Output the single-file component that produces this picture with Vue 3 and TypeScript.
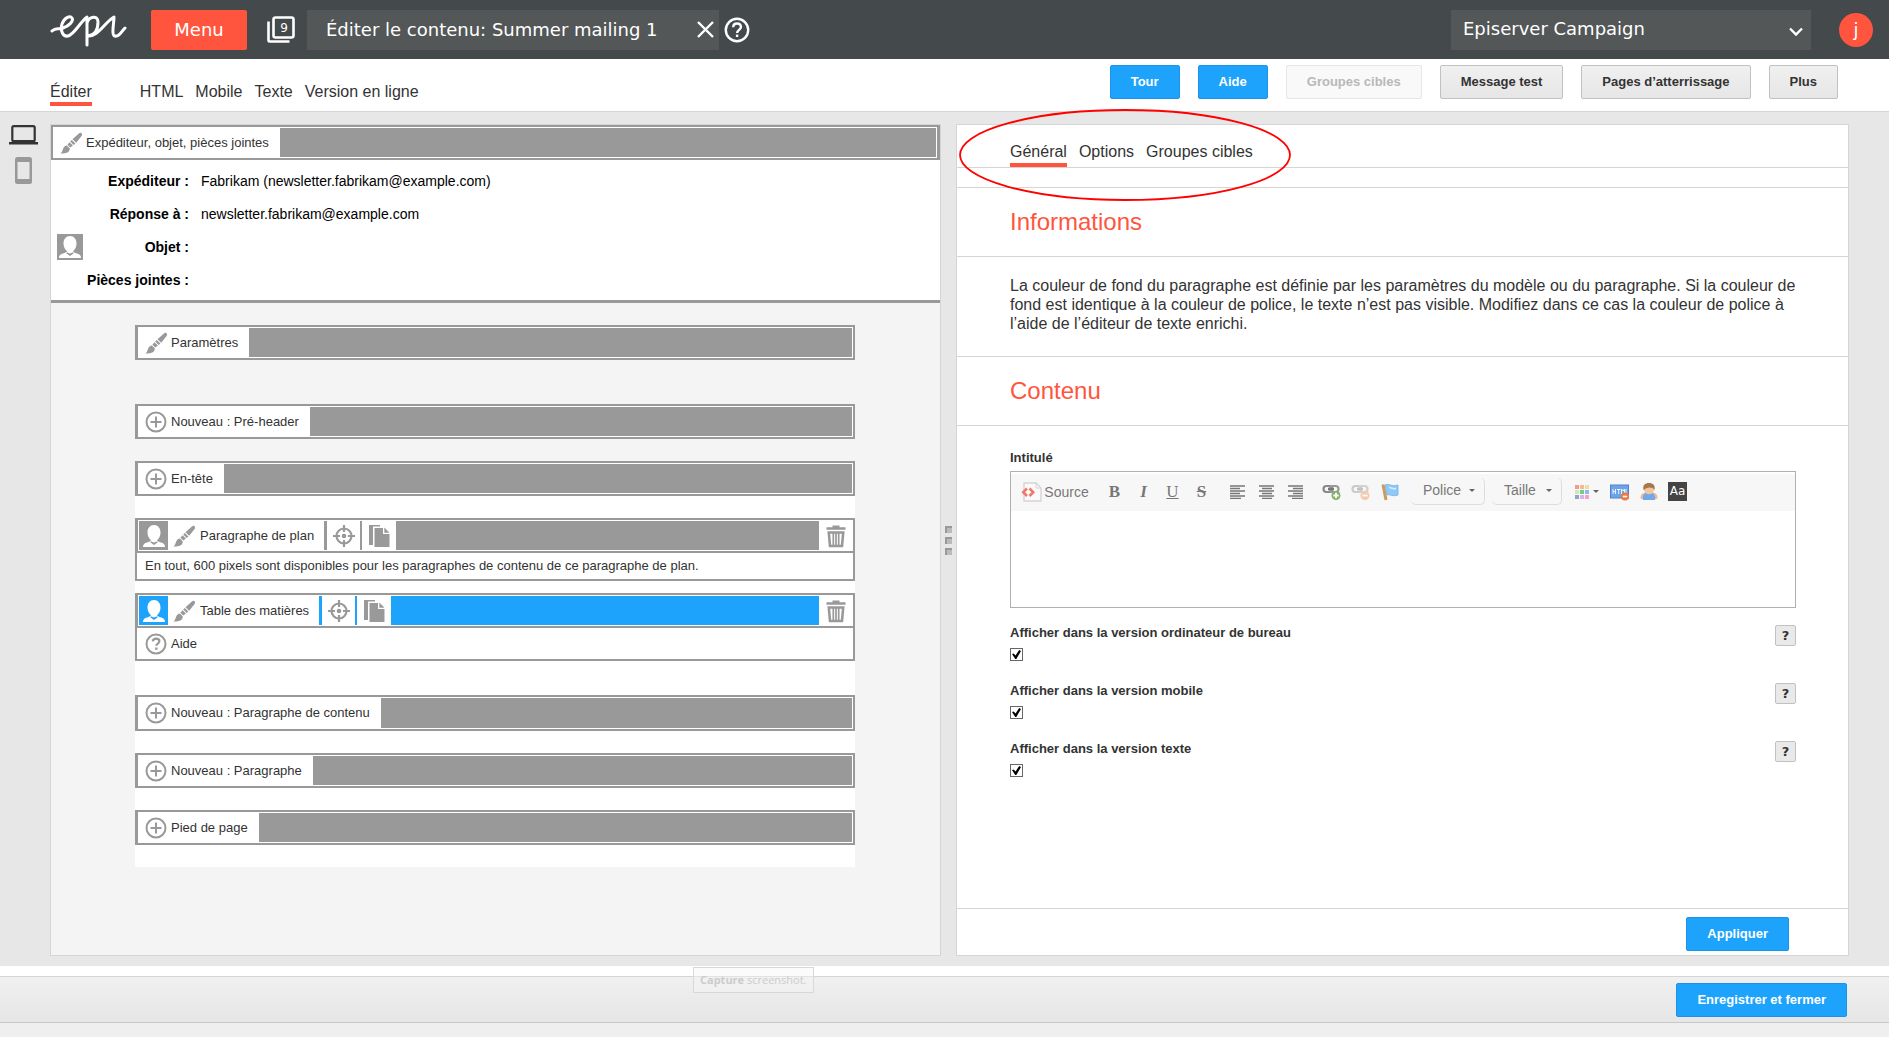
<script setup lang="ts">
import { ref } from 'vue'

interface Block {
  id: string
  label: string
  icon: 'brush' | 'plus'
  tools?: boolean
  selected?: boolean
  note?: string
  help?: string
}

interface Display {
  id: string
  label: string
}

const views: string[] = ['HTML', 'Mobile', 'Texte', 'Version en ligne']

const sender = [
  { label: 'Expéditeur :', value: 'Fabrikam (newsletter.fabrikam@example.com)' },
  { label: 'Réponse à :', value: 'newsletter.fabrikam@example.com' },
  { label: 'Objet :', value: '', person: true },
  { label: 'Pièces jointes :', value: '' },
]

const topBlocks: Block[] = [
  { id: 'params', label: 'Paramètres', icon: 'brush' },
  { id: 'preheader', label: 'Nouveau : Pré-header', icon: 'plus' },
  { id: 'header', label: 'En-tête', icon: 'plus' },
]

const bodyBlocks: Block[] = [
  {
    id: 'layout',
    label: 'Paragraphe de plan',
    icon: 'brush',
    tools: true,
    note: 'En tout, 600 pixels sont disponibles pour les paragraphes de contenu de ce paragraphe de plan.',
  },
  { id: 'toc', label: 'Table des matières', icon: 'brush', tools: true, selected: true, help: 'Aide' },
  { id: 'content', label: 'Nouveau : Paragraphe de contenu', icon: 'plus' },
  { id: 'paragraph', label: 'Nouveau : Paragraphe', icon: 'plus' },
  { id: 'footer', label: 'Pied de page', icon: 'plus' },
]

const displays: Display[] = [
  { id: 'desktop', label: 'Afficher dans la version ordinateur de bureau' },
  { id: 'mobile', label: 'Afficher dans la version mobile' },
  { id: 'text', label: 'Afficher dans la version texte' },
]

const shown = ref<string[]>(['desktop', 'mobile', 'text'])
const title = ref('')
</script>

<template>
  <div class="page">
    <svg class="sprite" aria-hidden="true">
      <symbol id="i-brush" viewBox="0 0 22 22">
        <path d="M21.500 1.200c.9.900.6 2-.1 3l-5.200 6.600-3.700-3.600 6.400-5.800c.9-.8 1.900-.9 2.600-.2zM11.800 7.900l3.600 3.500-1.700 1.700-3.500-3.500zM9.500 10.200l3.400 3.400-2.600 2-2.900-2.900zM6.900 13.500l2.800 2.800c.3 1.800-.7 3.400-2.500 4.300-1.800.8-4.300 1-6.700.9 1.700-1.300 1.900-2.800 2.600-4.700.7-2 2-3 3.800-3.300z" fill="currentColor" />
      </symbol>
      <symbol id="i-plus" viewBox="0 0 22 22">
        <circle cx="11" cy="11" r="9.500" fill="none" stroke="currentColor" stroke-width="2" />
        <path d="M11 5.500v11M5.500 11h11" stroke="currentColor" stroke-width="2" />
      </symbol>
      <symbol id="i-help" viewBox="0 0 22 22">
        <circle cx="11" cy="11" r="9.500" fill="none" stroke="currentColor" stroke-width="2" />
        <path d="M7.800 8.300c.2-1.700 1.500-2.700 3.300-2.700 1.900 0 3.300 1 3.300 2.600 0 2.200-3.100 2.400-3.100 4.500" fill="none" stroke="currentColor" stroke-width="2.200" />
        <path d="M10.100 14.500h2.400v2.300h-2.400z" fill="currentColor" />
      </symbol>
      <symbol id="i-person" viewBox="0 0 26 26">
        <path d="M13 2c4 0 6.500 3.300 6.500 7.500 0 3.300-1.500 6.200-3.500 7.800.5 1.300 2 1.600 4 2.200 2.500.7 4 1.700 4 4.500H2c0-2.800 1.500-3.800 4-4.500 2-.6 3.500-.9 4-2.200-2-1.600-3.500-4.500-3.500-7.800C6.500 5.300 9 2 13 2z" fill="#fff" />
        <path d="M10 18.300q3 2.200 6 0l.8 1L13 22l-3.800-2.700z" fill="currentColor" />
      </symbol>
      <symbol id="i-target" viewBox="0 0 22 22">
        <circle cx="11" cy="11" r="7.500" fill="none" stroke="currentColor" stroke-width="2.200" />
        <circle cx="11" cy="11" r="2.300" fill="currentColor" />
        <path d="M11 0v7M11 15v7M0 11h7M15 11h7" stroke="currentColor" stroke-width="2.200" />
      </symbol>
      <symbol id="i-copy" viewBox="0 0 22 24">
        <path d="M1 1h11v1.500H5V21H1z" fill="currentColor" />
        <path d="M6.500 4H15v6h6.500v13h-15z" fill="currentColor" />
        <path d="M16.300 3.500l5.200 5.200h-5.200z" fill="currentColor" />
      </symbol>
      <symbol id="i-trash" viewBox="0 0 20 24">
        <path d="M.5 3.200h6V1.500h7v1.700h6v2.600H.5z" fill="currentColor" />
        <path d="M2.800 8.500h14.400L16 22H4z" fill="none" stroke="currentColor" stroke-width="2.600" />
        <path d="M7.300 9v12M10 9v12M12.700 9v12" stroke="currentColor" stroke-width="1.700" />
      </symbol>
      <symbol id="i-chain" viewBox="0 0 20 18">
        <rect x="1.500" y="3" width="9" height="6" rx="3" fill="none" stroke="#888" stroke-width="2.200" />
        <rect x="7.500" y="3" width="9" height="6" rx="3" fill="none" stroke="#999" stroke-width="2.200" />
        <path d="M6 6h6" stroke="#777" stroke-width="2" />
      </symbol>
    </svg>

    <header class="topbar">
      <svg class="logo" viewBox="0 0 78 34" aria-label="epi">
        <path d="M2 18C6 14 8 17 13 15c6-2 11-7 9-10-2-3-8 0-10 6-2 7 1 13 6 12C24 22 31 8 37 4M37 6v26M37 10c2-7 11-8 11-1 0 7-2 13-10 14C48 24 54 10 64 4c0 6-3 19 1 19 4 1 6-4 10-8" fill="none" stroke="#fff" stroke-width="3" stroke-linecap="round" stroke-linejoin="round" />
      </svg>
      <button class="menu" type="button">Menu</button>
      <button class="windows" type="button" aria-label="Fenêtres ouvertes">
        <svg viewBox="0 0 28 28" aria-hidden="true">
          <rect x="6.500" y="1.500" width="20" height="20" rx="2" fill="none" stroke="#fff" stroke-width="2.600" />
          <path d="M1.500 5.500v19q0 1 1 1h20" fill="none" stroke="#fff" stroke-width="2.600" />
        </svg>
        <span class="count">9</span>
      </button>
      <div class="doc">
        <h1>Éditer le contenu: Summer mailing 1</h1>
        <button type="button" aria-label="Fermer">
          <svg width="17" height="17" viewBox="0 0 17 17"><path d="M1 1l15 15M16 1L1 16" stroke="#fff" stroke-width="2.400" /></svg>
        </button>
      </div>
      <button class="tophelp" type="button" aria-label="Aide">
        <svg width="26" height="26" viewBox="0 0 26 26">
          <circle cx="13" cy="13" r="11.200" fill="none" stroke="#fff" stroke-width="2.400" />
          <path d="M9.200 10.200c0-2.300 1.600-3.700 3.800-3.700s3.900 1.400 3.900 3.500c0 2.800-3.800 3-3.800 6" fill="none" stroke="#fff" stroke-width="2.400" />
          <path d="M11.900 17.600h2.400V20h-2.400z" fill="#fff" />
        </svg>
      </button>
      <div class="product">
        <select aria-label="Produit"><option>Episerver Campaign</option></select>
        <svg width="14" height="10" viewBox="0 0 14 10" aria-hidden="true"><path d="M1 1.500l6 6 6-6" fill="none" stroke="#fff" stroke-width="2.400" /></svg>
      </div>
      <button class="user" type="button">j</button>
    </header>

    <nav class="subbar">
      <div class="tabs">
        <a class="tab active first" href="#edit">Éditer</a>
        <a v-for="v in views" :key="v" class="tab" :href="'#' + v">{{ v }}</a>
      </div>
      <div class="actions">
        <button class="btn primary" type="button">Tour</button>
        <button class="btn primary" type="button">Aide</button>
        <button class="btn" type="button" disabled>Groupes cibles</button>
        <button class="btn" type="button">Message test</button>
        <button class="btn" type="button">Pages d’atterrissage</button>
        <button class="btn" type="button">Plus</button>
      </div>
    </nav>

    <main class="work">
      <aside class="devices">
        <button type="button" aria-label="Ordinateur">
          <svg width="29" height="20" viewBox="0 0 29 20"><rect x="3.300" y="1.200" width="22.400" height="15" rx="1.500" fill="none" stroke="#333" stroke-width="2.200" /><path d="M0 17h29v2.500H0z" fill="#333" /></svg>
        </button>
        <button type="button" aria-label="Mobile">
          <svg width="17" height="27" viewBox="0 0 17 27"><rect width="17" height="27" rx="2.500" fill="#999" /><path d="M2.500 5h12v17h-12z" fill="#e7e7e7" /></svg>
        </button>
      </aside>

      <section class="panel preview">
        <div class="bar">
          <button class="label" type="button"><svg class="ico"><use href="#i-brush" /></svg>Expéditeur, objet, pièces jointes</button>
          <span class="fill"></span>
        </div>
        <dl class="sender">
          <div v-for="s in sender" :key="s.label" class="row">
            <span class="mark"><svg v-if="s.person" class="face"><use href="#i-person" /></svg></span>
            <dt>{{ s.label }}</dt>
            <dd>{{ s.value }}</dd>
          </div>
        </dl>

        <div class="canvas">
          <div v-for="b in topBlocks" :key="b.id" class="bar" :class="b.id">
            <button class="label" type="button"><svg class="ico"><use :href="'#i-' + b.icon" /></svg>{{ b.label }}</button>
            <span class="fill"></span>
          </div>
          <div class="sheet">
            <div v-for="b in bodyBlocks" :key="b.id" class="block" :class="[b.id, { selected: b.selected }]">
              <div class="bar">
                <span v-if="b.tools" class="who"><svg><use href="#i-person" /></svg></span>
                <button class="label" :class="{ near: b.tools }" type="button"><svg class="ico"><use :href="'#i-' + b.icon" /></svg>{{ b.label }}</button>
                <template v-if="b.tools">
                  <button class="tool wide" type="button" aria-label="Cibler"><svg class="ico"><use href="#i-target" /></svg></button>
                  <button class="tool" type="button" aria-label="Copier"><svg class="sheetico"><use href="#i-copy" /></svg></button>
                </template>
                <span class="fill"></span>
                <button v-if="b.tools" class="bin" type="button" aria-label="Supprimer"><svg><use href="#i-trash" /></svg></button>
              </div>
              <p v-if="b.note" class="sub note">{{ b.note }}</p>
              <a v-if="b.help" class="sub aid" href="#aide"><svg class="ico"><use href="#i-help" /></svg>{{ b.help }}</a>
            </div>
          </div>
        </div>
      </section>

      <div class="splitter"><i></i><i></i><i></i></div>

      <section class="panel props">
        <div class="head">
          <div class="tabs">
            <a class="tab active" href="#general">Général</a>
            <a class="tab" href="#options">Options</a>
            <a class="tab" href="#groupes">Groupes cibles</a>
          </div>
        </div>
        <div class="strip"></div>
        <h2>Informations</h2>
        <p class="info">La couleur de fond du paragraphe est définie par les paramètres du modèle ou du paragraphe. Si la couleur de fond est identique à la couleur de police, le texte n’est pas visible. Modifiez dans ce cas la couleur de police à l’aide de l’éditeur de texte enrichi.</p>
        <h2>Contenu</h2>
        <form class="form" @submit.prevent>
          <label class="name" for="intitule">Intitulé</label>
          <div class="editor">
            <div class="tools">
              <button class="source" type="button">
                <svg width="21" height="20" viewBox="0 0 21 20"><path d="M3 1h12l5 5v13H3z" fill="#fafafa" stroke="#d5d5d5" stroke-width="1.400" /><path d="M15 1v5h5" fill="none" stroke="#d5d5d5" /><path d="M6 6.500L2.300 10.200 6 14M8.500 6.500l3.700 3.700L8.500 14" fill="none" stroke="#f0776c" stroke-width="2.600" /></svg>
                Source
              </button>
              <div class="group letters">
                <button type="button" class="b">B</button>
                <button type="button" class="i">I</button>
                <button type="button" class="u">U</button>
                <button type="button" class="s">S</button>
              </div>
              <div class="group">
                <button type="button" aria-label="Gauche"><svg width="16" height="14" viewBox="0 0 16 14"><path d="M0 1h15M0 3.500h10M0 6h15M0 8.500h10M0 11h15M0 13.500h11" stroke="#777" stroke-width="1.300" /></svg></button>
                <button type="button" aria-label="Centre"><svg width="16" height="14" viewBox="0 0 16 14"><path d="M0 1h15M3 3.500h10M0 6h15M3 8.500h10M0 11h15M3 13.500h10" stroke="#777" stroke-width="1.300" /></svg></button>
                <button type="button" aria-label="Droite"><svg width="16" height="14" viewBox="0 0 16 14"><path d="M0 1h15M5 3.500h10M0 6h15M5 8.500h10M0 11h15M4 13.500h11" stroke="#777" stroke-width="1.300" /></svg></button>
              </div>
              <div class="group">
                <button type="button" aria-label="Lien"><svg width="20" height="18" viewBox="0 0 20 18"><use href="#i-chain" /><circle cx="14" cy="12.500" r="4.500" fill="#7fb366" /><path d="M14 9.800v5.400M11.300 12.500h5.400" stroke="#fff" stroke-width="1.800" /></svg></button>
                <button type="button" aria-label="Supprimer le lien" class="faded"><svg width="20" height="18" viewBox="0 0 20 18"><use href="#i-chain" /><circle cx="14" cy="12.500" r="4.500" fill="#f08a4b" /><path d="M11.300 12.500h5.400" stroke="#fff" stroke-width="1.800" /></svg></button>
                <button type="button" aria-label="Ancre"><svg width="18" height="18" viewBox="0 0 18 18"><path d="M4 2c4-2 6 2 13 0v10c-5 2-8-1-11 0z" fill="#8fc9f7" stroke="#6db3ea" stroke-width=".8" /><path d="M2 1.500l3 15.500" stroke="#c99a5b" stroke-width="3" /><path d="M8 4.500c3 0 3 2 7 1" fill="none" stroke="#d6eeff" stroke-width="1.500" /></svg></button>
              </div>
              <div class="combo"><select aria-label="Police"><option>Police</option></select><i class="caret"></i></div>
              <div class="combo small"><select aria-label="Taille"><option>Taille</option></select><i class="caret"></i></div>
              <div class="group">
                <button type="button" class="swatch" aria-label="Couleur"><svg width="14" height="14" viewBox="0 0 14 14"><path d="M0 0h4v4H0z" fill="#f19a96" /><path d="M5 0h4v4H5z" fill="#f6b89a" /><path d="M10 0h4v4h-4z" fill="#f5dc94" /><path d="M0 5h4v4H0z" fill="#cdeab0" /><path d="M5 5h4v4H5z" fill="#71cf80" /><path d="M10 5h4v4h-4z" fill="#85bdf0" /><path d="M0 10h4v4H0z" fill="#8fa3cd" /><path d="M5 10h4v4H5z" fill="#dcb1ea" /><path d="M10 10h4v4h-4z" fill="#fa9ccc" /></svg><i class="caret"></i></button>
                <button type="button" aria-label="HTML"><svg width="20" height="18" viewBox="0 0 20 18"><rect x=".5" y="2" width="18" height="13" fill="#6ea3e8" stroke="#4f82cc" /><path d="M3 6v5M5.500 6v5M3 8.500h2.500M7 6.500h3.500M8.700 6.500V11M11.500 11V6l1.500 2 1.500-2v5M16 6v4.500h1.500" fill="none" stroke="#e8f2ff" /><circle cx="15" cy="13.500" r="4" fill="#ec7b3c" /><path d="M12.800 13.500h4.400" stroke="#fff" stroke-width="1.600" /></svg></button>
                <button type="button" aria-label="Personnaliser"><svg width="18" height="18" viewBox="0 0 18 18"><path d="M1 16c-2-5 3-7 8-7s10 2 8 7z" fill="#f0b98d" /><path d="M3 17c-1-5 2-8 6-8s7 3 6 8z" fill="#6fa9ea" /><circle cx="9" cy="6" r="5.200" fill="#f2c7a0" /><path d="M3.500 7C2.500 2 5 0 9 0s6.500 2 5.500 7C12 3.500 7 4 3.500 7z" fill="#a9754a" /></svg></button>
                <button type="button" class="aa"><span>Aa</span></button>
              </div>
            </div>
            <textarea id="intitule" v-model="title"></textarea>
          </div>
          <div v-for="d in displays" :key="d.id" class="option">
            <div>
              <label :for="d.id">{{ d.label }}</label>
              <input :id="d.id" v-model="shown" type="checkbox" :value="d.id" />
            </div>
            <button type="button" :aria-label="'Aide : ' + d.label">?</button>
          </div>
        </form>
        <div class="apply"><button class="btn primary" type="button">Appliquer</button></div>
        <svg class="ring" viewBox="0 0 332 92" aria-hidden="true"><ellipse cx="166" cy="46" rx="165" ry="45" fill="none" stroke="#f00" stroke-width="1.800" /></svg>
      </section>
    </main>

    <footer class="bottom">
      <div class="savebar"><button class="btn primary" type="button">Enregistrer et fermer</button></div>
      <div class="capture"><b>Capture</b> screenshot.</div>
    </footer>
  </div>
</template>

<style>
body {
  margin: 0;
}
</style>

<style scoped>
* {
  box-sizing: border-box;
}
.page {
  display: flex;
  flex-direction: column;
  min-height: 100vh;
  background: #fff;
  color: #333;
  font: 13px/16px "Liberation Sans", Arial, sans-serif;
}
.sprite {
  display: none;
}
button {
  display: flex;
  align-items: center;
  justify-content: center;
  margin: 0;
  padding: 0;
  border: 0;
  background: none;
  color: inherit;
  font: inherit;
  white-space: nowrap;
}
svg {
  flex: none;
}
a {
  color: inherit;
  text-decoration: none;
}

/* top bar */
.topbar {
  display: flex;
  align-items: center;
  height: 59px;
  padding: 0 16px 0 50px;
  background: #44494b;
  color: #fff;
  font: 18px/24px "DejaVu Sans", Verdana, sans-serif;
}
.logo {
  width: 78px;
  height: 34px;
  margin-right: 23px;
}
.menu {
  width: 96px;
  height: 40px;
  border-radius: 2px;
  background: #ff553e;
}
.windows {
  position: relative;
  width: 28px;
  height: 28px;
  margin: 0 12px 0 20px;
}
.windows .count {
  position: absolute;
  top: 0;
  right: 0;
  width: 22px;
  font-size: 12px;
  text-align: center;
}
.doc {
  display: flex;
  align-items: center;
  justify-content: space-between;
  width: 412px;
  height: 40px;
  padding: 0 5px 0 19px;
  background: #535757;
}
.doc h1 {
  margin: 0;
  font: inherit;
  white-space: nowrap;
}
.tophelp {
  margin-left: 5px;
}
.product {
  position: relative;
  width: 360px;
  height: 40px;
  margin-left: auto;
}
.product select {
  width: 100%;
  height: 100%;
  padding: 0 12px 2px;
  border: 0;
  border-radius: 0;
  appearance: none;
  background: #535757;
  color: #fff;
  font: inherit;
}
.product svg {
  position: absolute;
  top: 17px;
  right: 8px;
}
.user {
  width: 34px;
  height: 34px;
  margin-left: 28px;
  border-radius: 50%;
  background: #ff553e;
}

/* sub bar */
.subbar {
  display: flex;
  justify-content: space-between;
  height: 53px;
  padding: 6px 51px 0 50px;
  border-bottom: 1px solid #d5d5d5;
}
.tabs {
  display: flex;
  gap: 12px;
  font-size: 16px;
  line-height: 20px;
}
.subbar .tabs {
  padding-top: 17px;
}
.tab {
  height: 25px;
  white-space: nowrap;
}
.subbar .tab {
  height: 24px;
}
.tab.active {
  border-bottom: 4px solid #ff553e;
}
.tab.first {
  margin-right: 36px;
}
.actions {
  display: flex;
  gap: 18px;
}
.btn {
  height: 34px;
  padding: 0 20px;
  border: 1px solid #c1c1c1;
  border-radius: 2px;
  background: linear-gradient(#f0f0f0, #e6e6e6);
  font-weight: bold;
}
.btn:disabled {
  border-color: #e6e6e6;
  background: #f9f9f9;
  color: #b8b8b8;
}
.btn.primary {
  border-color: #1a93ea;
  background: #1da3fc;
  color: #fff;
}

/* work area */
.work {
  display: grid;
  flex: 1;
  grid-template-columns: 50px minmax(760px, 891fr) 15px minmax(780px, 893fr);
  padding: 12px 40px 10px 0;
  background: #e7e7e7;
}
.devices {
  display: flex;
  flex-direction: column;
  align-items: flex-start;
  gap: 12px;
  padding: 1px 0 0 9px;
}
.devices button {
  width: 29px;
}
.panel {
  border: 1px solid #d5d5d5;
}
.preview {
  background: #f4f4f4;
}
.bar {
  display: flex;
  height: 35px;
  padding: 1px;
  border: 2px solid #999;
  border-left-width: 3px;
  background: #fff;
}
.preview > .bar {
  border-right-width: 3px;
  border-left-width: 2px;
}
.label {
  gap: 4px;
  padding: 0 11px 0 6px;
}
.label.near {
  gap: 5px;
  padding: 0 10px 0 5px;
}
.ico {
  width: 22px;
  height: 22px;
  color: #999;
}
.fill {
  flex: 1;
  background: #999;
}
.sender {
  margin: 0;
  padding: 4px 0;
  border-bottom: 3px solid #999;
  background: #fff;
  color: #000;
  font-size: 14px;
}
.row {
  display: flex;
  align-items: center;
  height: 33px;
}
.mark {
  width: 32px;
  padding-left: 6px;
}
.face {
  display: block;
  width: 26px;
  height: 26px;
  background: #999;
  color: #999;
}
.row dt {
  width: 106px;
  font-weight: bold;
  text-align: right;
  white-space: nowrap;
}
.row dd {
  margin: 0 0 0 12px;
}
.canvas {
  width: 720px;
  margin: 22px 84px;
}
.canvas .params {
  margin-bottom: 44px;
}
.canvas .preheader {
  margin-bottom: 22px;
}
.sheet {
  padding: 22px 0;
  background: #fff;
}
.block {
  margin-bottom: 22px;
}
.block.layout {
  margin-bottom: 12px;
}
.block.toc {
  margin-bottom: 34px;
}
.block.content .bar {
  height: 36px;
}
.block.footer {
  margin-bottom: 0;
}
.who {
  display: flex;
  align-items: center;
  justify-content: center;
  width: 29px;
  background: #999;
  color: #999;
}
.who svg {
  width: 26px;
  height: 26px;
}
.tool {
  width: 36px;
  border-left: 2px solid #999;
}
.tool.wide {
  border-left-width: 3px;
}
.sheetico {
  width: 22px;
  height: 24px;
  color: #999;
}
.bin {
  width: 33px;
  color: #999;
}
.bin svg {
  width: 20px;
  height: 24px;
}
.selected .who,
.selected .fill {
  background: #1da3fc;
}
.selected .who {
  color: #1da3fc;
}
.selected .tool {
  border-color: #1da3fc;
}
.sub {
  display: flex;
  align-items: center;
  margin: 0;
  padding: 0 8px;
  border: 2px solid #999;
  border-top: 0;
}
.note {
  height: 28px;
}
.aid {
  gap: 4px;
  height: 33px;
}

/* splitter */
.splitter {
  display: flex;
  flex-direction: column;
  align-items: center;
  justify-content: center;
  gap: 4px;
}
.splitter i {
  width: 7px;
  height: 7px;
  border-top: 2px solid #999;
  border-left: 2px solid #999;
  background: #bbb;
}

/* properties */
.props {
  position: relative;
  display: flex;
  flex-direction: column;
  background: #fff;
}
.head {
  height: 43px;
  padding: 17px 53px 0;
  border-bottom: 1px solid #d5d5d5;
}
.strip {
  height: 20px;
  border-bottom: 1px solid #d5d5d5;
}
h2 {
  margin: 0;
  padding: 20px 53px;
  border-bottom: 1px solid #d5d5d5;
  color: #ff553e;
  font-size: 24px;
  font-weight: normal;
  line-height: 28px;
}
.info {
  margin: 0;
  padding: 19px 46px 23px 53px;
  border-bottom: 1px solid #d5d5d5;
  font-size: 16px;
  line-height: 19px;
}
.form {
  display: flex;
  flex: 1;
  flex-direction: column;
  padding: 24px 52px 0 53px;
}
.form label {
  display: block;
  font-weight: bold;
}
.name {
  margin-bottom: 5px;
}
.editor {
  display: flex;
  flex-direction: column;
  margin-bottom: 17px;
  padding-top: 2px;
  border: 1px solid #b0b0b0;
}
.tools {
  display: flex;
  gap: 7px;
  height: 37px;
  padding: 4px 6px 6px;
  background: #f7f7f7;
  color: #777;
  font-size: 14px;
}
.source {
  gap: 2px;
  width: 76px;
}
.group {
  display: flex;
}
.group button {
  width: 29px;
}
.letters {
  font: 17px/18px "Liberation Serif", serif;
}
.b {
  font-weight: bold;
}
.i {
  font-style: italic;
  font-weight: bold;
}
.u {
  text-decoration: underline;
}
.s {
  font-weight: bold;
  text-decoration: line-through;
}
.faded {
  opacity: 0.4;
}
.combo {
  position: relative;
  width: 74px;
}
.combo.small {
  width: 70px;
}
.combo select {
  width: 100%;
  height: 100%;
  padding: 0 12px 3px;
  border: 0;
  border-right: 1px solid #ddd;
  border-bottom: 1px solid #ddd;
  border-radius: 5px;
  appearance: none;
  background: none;
  color: inherit;
  font: inherit;
}
.caret {
  width: 0;
  height: 0;
  border: 3px solid transparent;
  border-top-color: #666;
  border-bottom: 0;
}
.combo .caret {
  position: absolute;
  top: 11px;
  right: 10px;
}
.group .swatch {
  gap: 4px;
  width: 36px;
}
.aa span {
  width: 19px;
  height: 19px;
  background: #444;
  color: #fff;
  font: 12px/19px "DejaVu Sans", sans-serif;
}
textarea {
  height: 96px;
  padding: 8px;
  border: 0;
  outline: 0;
  resize: none;
  font: inherit;
}
.option {
  display: flex;
  justify-content: space-between;
  height: 58px;
}
.option input {
  display: block;
  width: 13px;
  height: 13px;
  margin: 7px 0 0;
  border: 1px solid #666;
  appearance: none;
  background: #fff;
}
.option input:checked::after {
  display: block;
  width: 9px;
  height: 9px;
  margin: 1px;
  background: #000;
  clip-path: polygon(0 45%, 18% 40%, 40% 60%, 80% 0, 100% 12%, 48% 100%, 36% 100%);
  content: "";
}
.option button {
  width: 21px;
  height: 21px;
  border: 1px solid #c1c1c1;
  border-radius: 2px;
  background: #e9e9e9;
  font: bold 13px/19px "DejaVu Sans", sans-serif;
}
.apply {
  display: flex;
  justify-content: flex-end;
  height: 47px;
  padding: 8px 59px 0 0;
  border-top: 1px solid #d5d5d5;
}
.ring {
  position: absolute;
  top: -16px;
  left: 2px;
  width: 332px;
  height: 92px;
  pointer-events: none;
}

/* bottom bar */
.bottom {
  position: relative;
  padding: 10px 0 14px;
  background: linear-gradient(#fff 10px, #efefef 10px);
}
.savebar {
  display: flex;
  align-items: center;
  justify-content: flex-end;
  height: 47px;
  padding-right: 42px;
  border-top: 1px solid #d5d5d5;
  border-bottom: 1px solid #c8c8c8;
  background: linear-gradient(#f0f0f0, #e6e6e6);
}
.capture {
  position: absolute;
  top: 1px;
  left: 693px;
  padding: 4px 6px;
  border: 1px solid #d8d8d8;
  background: rgb(245 245 245 / 40%);
  color: #ccc;
  font: 11px/16px "Open Sans", sans-serif;
}
</style>
